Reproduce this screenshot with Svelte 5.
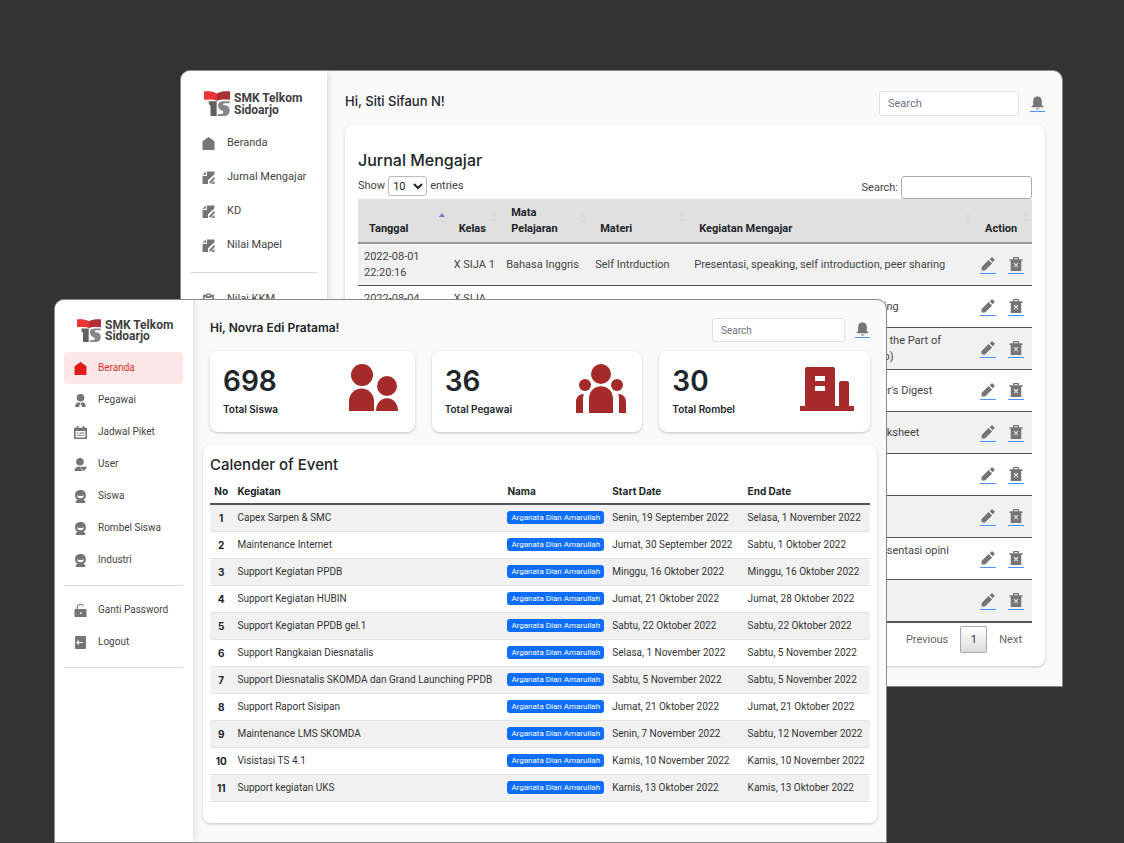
<script>
  const icons = {
    home: 'M12 0 1 8v16h22V8z',
    journal: 'M7 1v6H1zM9 1h14v5L11 17v7H1V9h8zM14 20l8-9 2 3-7 8-4 1zM23 18v6h-6z',
    clipboard: 'M8 1h8v2h6v20H2V3h6zm2 2v3h4V3zM5 7v13h14V7h-2v2H7V7zM7 12h10v2H7zm0 4h7v2H7z',
    tie: 'M12 0a7 7 0 1 1 0 14a7 7 0 0 1 0-14M2 24c0-6 3-9 7-9l3 3 3-3c4 0 7 3 7 9h-7l-2-5h-2l-2 5z',
    calendar: 'M5 0h3v3h8V0h3v3h5v21H0V3h5zM3 9v12h18V9zM5 12h3v2H5zm5 0h9v2h-9zM5 16h9v2H5zm11 0h3v2h-3z',
    heart: 'M11 0a7 7 0 1 1 0 14a7 7 0 0 1 0-14M1 24c0-5 3-8 7-8h4c0 3 2 6 4 8zM18 24l-5-5c-1-3 3-5 5-2 2-3 6-1 5 2z',
    student: 'M12 0C5 0 2 4 2 10c0 4 2 7 5 8-3 1-4 3-4 6h18c0-3-1-5-4-6 3-1 5-4 5-8 0-6-3-10-10-10M6 9c1 1 3 2 6 2s5-1 6-2c0 4-2 6-6 6s-6-2-6-6',
    lock: 'M5 9V6c0-8 12-8 13-2h-2c-2-4-9-3-9 2v3h16v15H1V9zm6 6v3h3v-3z',
    logout: 'M2 0h20v24H2zM9 7l-5 5 5 5v-4h7v-2H9z',
    bell: 'M12 0c6 0 8 4 8 9v7l3 2v2H1v-2l3-2V9c0-5 2-9 8-9M8 22h8l-2 2h-4z',
    pencil: 'M1 23v-6L13 5l6 6L7 23zM15 4l3-3c1-1 2 0 3 1l2 2c1 1 0 2 0 2l-3 3z',
    trash: 'M7 0h10v4h6v3h-2v17H3V7H1V4h6zm2 2v2h6V2zM8 11l3 3-3 3 1 1 3-3 3 3 1-1-3-3 3-3-1-1-3 3-3-3z'
  };

  const backNav = [['home', 'Beranda'], ['journal', 'Jurnal Mengajar'], ['journal', 'KD'], ['journal', 'Nilai Mapel']];
  const frontNav = [['home', 'Beranda'], ['tie', 'Pegawai'], ['calendar', 'Jadwal Piket'], ['heart', 'User'], ['student', 'Siswa'], ['student', 'Rombel Siswa'], ['student', 'Industri']];
  const accountNav = [['lock', 'Ganti Password'], ['logout', 'Logout']];

  const journal = [
    ['2022-08-01 22:20:16', 'X SIJA 1', 'Bahasa Inggris', 'Self Intrduction', 'Presentasi, speaking, self introduction, peer sharing'],
    ['2022-08-04 07:10:22', 'X SIJA\n2', 'Bahasa Inggris', 'Self Intrduction', 'Speaking, self introduction in peer sharing'],
    ['2022-08-08 07:12:40', 'X SIJA 1', 'Bahasa Inggris', 'Part of Speech', 'Students read the text and then analyze the Part of\nSpeech in groups, share the answer (pro)'],
    ['2022-08-11 07:15:03', 'X SIJA 1', 'Bahasa Inggris', 'Reading', "Reading and summarizing an old Reader's Digest"],
    ['2022-08-15 07:11:35', 'X SIJA 1', 'Bahasa Inggris', 'Reading', 'Reading the text and answering the worksheet'],
    ['2022-08-18 07:14:19', 'X SIJA 1', 'Bahasa Inggris', 'Vocabulary', 'Diskusi kelompok'],
    ['2022-08-22 07:10:51', 'X SIJA 1', 'Bahasa Inggris', 'Opinion', 'Diskusi kelompok'],
    ['2022-08-25 07:13:27', 'X SIJA 1', 'Bahasa Inggris', 'Opinion', 'Diskusi kelompok, menulis teks dan presentasi opini\ndi depan kelas'],
    ['2022-08-29 07:12:08', 'X SIJA 1', 'Bahasa Inggris', 'Opinion', 'Diskusi kelompok']
  ];
  const journalHead = ['Tanggal', 'Kelas', 'Mata Pelajaran', 'Materi', 'Kegiatan Mengajar', 'Action'];

  const person = 'Arganata Dian Amarullah';
  const events = [
    ['Capex Sarpen & SMC', 'Senin, 19 September 2022', 'Selasa, 1 November 2022'],
    ['Maintenance Internet', 'Jumat, 30 September 2022', 'Sabtu, 1 Oktober 2022'],
    ['Support Kegiatan PPDB', 'Minggu, 16 Oktober 2022', 'Minggu, 16 Oktober 2022'],
    ['Support Kegiatan HUBIN', 'Jumat, 21 Oktober 2022', 'Jumat, 28 Oktober 2022'],
    ['Support Kegiatan PPDB gel.1', 'Sabtu, 22 Oktober 2022', 'Sabtu, 22 Oktober 2022'],
    ['Support Rangkaian Diesnatalis', 'Selasa, 1 November 2022', 'Sabtu, 5 November 2022'],
    ['Support Diesnatalis SKOMDA dan Grand Launching PPDB', 'Sabtu, 5 November 2022', 'Sabtu, 5 November 2022'],
    ['Support Raport Sisipan', 'Jumat, 21 Oktober 2022', 'Jumat, 21 Oktober 2022'],
    ['Maintenance LMS SKOMDA', 'Senin, 7 November 2022', 'Sabtu, 12 November 2022'],
    ['Visistasi TS 4.1', 'Kamis, 10 November 2022', 'Kamis, 10 November 2022'],
    ['Support kegiatan UKS', 'Kamis, 13 Oktober 2022', 'Kamis, 13 Oktober 2022']
  ];
  const stats = [['698', 'Total Siswa'], ['36', 'Total Pegawai'], ['30', 'Total Rombel']];
</script>

{#snippet icon(name)}
  <svg class="icon" viewBox="0 0 24 24" aria-hidden="true"><path fill-rule="evenodd" d={icons[name]} /></svg>
{/snippet}

{#snippet logo()}
  <div class="logo">
    <svg viewBox="0 0 76 76" aria-hidden="true">
      <path fill="#ee3338" d="M0 1C15 0 28 1 38 7V29C28 23 14 26 0 25Z" />
      <path fill="#ad3035" d="M76 1C62 0 48 1 38 7V29C48 23 62 26 76 25Z" />
      <path fill="#5f6163" d="M14 30H37V73H19V48C19 42 17 40 14 39Z" />
      <path fill="#85878a" d="M41 42C41 33 48 30 58 30H75V36H61C55 36 54 40 59 42C70 42 75 48 75 57C75 69 68 73 58 73H41V67H50C57 67 59 61 53 58C46 56 41 50 41 42Z" />
    </svg>
    <span>SMK Telkom<br />Sidoarjo</span>
  </div>
{/snippet}

{#snippet nav(items, active)}
  <ul>
    {#each items as [name, label], i}
      <li><a href="#top" class="item" class:active={i === active}>{@render icon(name)}{label}</a></li>
    {/each}
  </ul>
{/snippet}

{#snippet topbar(name)}
  <header>
    <h1>Hi, {name}!</h1>
    <input class="search" type="search" placeholder="Search" aria-label="Search" />
    <a class="glyph" href="#top" aria-label="Notifications">{@render icon('bell')}</a>
  </header>
{/snippet}

<div class="desktop">
  <section class="window back">
    <aside>
      {@render logo()}
      {@render nav(backNav, -1)}
      <hr />
      {@render nav([['clipboard', 'Nilai KKM']], -1)}
    </aside>
    <main>
      {@render topbar('Siti Sifaun N')}
      <div class="card journal">
        <h2>Jurnal Mengajar</h2>
        <div class="controls">
          <label>Show <select><option>10</option><option>25</option></select> entries</label>
          <label>Search: <input type="search" /></label>
        </div>
        <table>
          <thead>
            <tr>
              {#each journalHead as h, i}
                <th>{h}<svg class="sort" class:on={i === 0} viewBox="0 0 6 10" aria-hidden="true"><path d="M0 4 3 0l3 4z" /><path class="down" d="M0 6l3 4 3-4z" /></svg></th>
              {/each}
            </tr>
          </thead>
          <tbody>
            {#each journal as row}
              <tr>
                {#each row as cell}<td class="text">{cell}</td>{/each}
                <td>
                  <div class="actions">
                    <a class="glyph" href="#top" aria-label="Edit">{@render icon('pencil')}</a>
                    <a class="glyph" href="#top" aria-label="Delete">{@render icon('trash')}</a>
                  </div>
                </td>
              </tr>
            {/each}
          </tbody>
        </table>
        <div class="pager">
          <button>Previous</button><button class="current">1</button><button>Next</button>
        </div>
      </div>
    </main>
  </section>

  <section class="window front">
    <aside>
      {@render logo()}
      {@render nav(frontNav, 0)}
      <hr />
      {@render nav(accountNav, -1)}
      <hr />
    </aside>
    <main>
      {@render topbar('Novra Edi Pratama')}
      <div class="stats">
        {#each stats as [value, label], i}
          <div class="card stat">
            <div><strong>{value}</strong><span>{label}</span></div>
            {#if i === 0}
              <svg width="50" height="50" viewBox="0 0 50 50" aria-hidden="true">
                <circle cx="13" cy="11" r="11" /><path d="M0 47V37a12 12 0 0 1 25 0V47z" />
                <circle cx="38" cy="22" r="10" /><path d="M27 47c0-17 22-17 22 0z" />
              </svg>
            {:else if i === 1}
              <svg width="50" height="50" viewBox="0 0 50 50" aria-hidden="true">
                <circle cx="25" cy="10" r="10" /><circle cx="9" cy="21" r="6" /><circle cx="41" cy="21" r="6" />
                <path d="M13 49V35c0-17 24-17 24 0V49zM0 49V38c0-5 3-8 8-8-1 2-1 4-1 6V49zM50 49V38c0-5-3-8-8-8 1 2 1 4 1 6V49z" />
              </svg>
            {:else}
              <svg width="54" height="50" viewBox="0 0 54 50" aria-hidden="true">
                <path fill-rule="evenodd" d="M7 3h26q2 0 2 2v37h4V19q0-2 2-2h6q2 0 2 2v23h5v5H0v-5h5V5q0-2 2-2m8 9v5h10v-5zm0 10v5h10v-5z" />
              </svg>
            {/if}
          </div>
        {/each}
      </div>
      <div class="card events">
        <h2>Calender of Event</h2>
        <table>
          <thead><tr><th>No</th><th>Kegiatan</th><th>Nama</th><th>Start Date</th><th>End Date</th></tr></thead>
          <tbody>
            {#each events as [title, start, end], i}
              <tr><th scope="row">{i + 1}</th><td>{title}</td><td><span class="badge">{person}</span></td><td>{start}</td><td>{end}</td></tr>
            {/each}
          </tbody>
        </table>
      </div>
    </main>
  </section>
</div>

<style>
  :global(body) { margin: 0; background: #333; }
  * { box-sizing: border-box; }
  .desktop {
    display: grid;
    min-height: 100vh;
    background: #333;
    color: #212529;
    font: 400 10px/16px Roboto, sans-serif;
  }
  .window {
    grid-area: 1 / 1;
    display: flex;
    background: #fafafa;
    border: 1px solid #888;
    border-radius: 10px 10px 0 0;
    overflow: hidden;
  }
  .back { align-self: start; margin: 70px 61px 0 180px; font-size: 11px; }
  .front { margin: 299px 237px 0 54px; z-index: 1; }

  aside { background: #fff; box-shadow: 0 0 8px rgb(0 0 0 / 18%); flex: none; }
  .back aside { width: 146px; padding: 19px 10px 0 9px; }
  .front aside { width: 138px; padding: 17px 10px 0 9px; }
  .logo { display: flex; align-items: center; gap: 4px; margin-left: 14px; height: 27px; color: #414042; font-size: 12px; line-height: 12px; font-weight: 700; white-space: nowrap; }
  .logo svg { width: 26px; flex: none; }
  .front .logo { margin-left: 13px; line-height: 11px; }
  .front .logo svg { width: 24px; }
  ul { list-style: none; margin: 0; padding: 0; }
  .item { display: flex; align-items: center; height: 34px; padding-left: 12px; gap: 12px; color: #444; text-decoration: none; border-radius: 3px; white-space: nowrap; }
  .icon { width: 13px; height: 13px; fill: #757575; flex: none; display: block; }
  .back ul { padding-top: 9px; }
  .front ul { padding-top: 8px; }
  .front .item { height: 32px; padding-left: 10px; gap: 11px; }
  .front .item.active { color: #e03131; background: #fde7e7; }
  .active .icon { fill: #e01b1b; }
  hr { border: 0; border-top: 1px solid #d8dadb; margin: 10px 0 0; }
  .front hr { margin-top: 9px; }

  main { flex: 1; min-width: 0; }
  .back main { padding: 20px 17px 20px 18px; }
  .front main { padding: 18px 9px 18px 10px; }
  header { display: flex; align-items: center; height: 25px; }
  h1 { flex: 1; margin: 0; padding-bottom: 5px; font: 500 13px/16px Inter, sans-serif; }
  .front h1 { font-size: 12px; font-weight: 600; }
  h2 { margin: 0; font: 500 16px/20px Inter, sans-serif; }
  .front h2 { font-size: 15px; }
  input, select, button { font: inherit; color: inherit; }
  .search { width: 140px; height: 25px; border: 1px solid #dee2e6; border-radius: 3px; background: #fff; padding: 0 8px; margin-right: 11px; }
  .search::placeholder { color: #6c757d; opacity: 1; }
  .glyph { display: block; width: 15px; padding: 0 1px 1px; border-bottom: 1px solid #4d94ff; }
  header .icon { height: 14px; }
  .card { background: #fff; border-radius: 8px; box-shadow: 0 1px 3px rgb(0 0 0 / 22%); }
  table { width: 100%; border-collapse: collapse; table-layout: fixed; }
  th { text-align: left; font-weight: 700; }
  tbody tr:nth-child(odd) { background: #f1f1f1; }

  .journal { margin-top: 9px; padding: 25px 13px 13px; }
  .controls { display: flex; justify-content: space-between; height: 23px; margin-top: 6px; color: #444; }
  .controls label { display: flex; align-items: center; align-self: flex-start; gap: 3px; }
  .controls select { width: 39px; height: 20px; border: 1px solid #bbb; border-radius: 3px; background: #fff; padding: 0; color: #222; }
  .controls input { width: 131px; height: 23px; border: 1px solid #aaa; border-radius: 3px; background: #fff; }
  .journal thead { background: #e0e0e0; }
  .journal thead th { position: relative; height: 44px; padding: 5px 11px; vertical-align: bottom; border-bottom: 2px solid #999; }
  .journal th:nth-child(1) { width: 13.3%; }
  .journal th:nth-child(2) { width: 7.8%; }
  .journal th:nth-child(3) { width: 13.2%; }
  .journal th:nth-child(4) { width: 14.7%; }
  .journal th:nth-child(6) { width: 8.6%; }
  .journal td { height: 42px; padding: 5px 1px 4px 6px; border-bottom: 1px solid #555; color: #444; }
  .text { white-space: pre-line; }
  .journal tbody tr:last-child td { border-bottom-width: 2px; }
  .sort { position: absolute; right: 3px; top: 14px; width: 6px; height: 10px; fill: #d9d9db; }
  .sort.on { fill: #7478e0; }
  .sort.on .down { display: none; }
  .actions { display: flex; gap: 12px; }
  .actions .glyph { width: 16px; padding-bottom: 2px; }
  .actions .icon { width: 14px; height: 14px; }
  .pager { display: flex; justify-content: flex-end; gap: 12px; padding: 3px 10px 0 0; }
  .pager button { height: 27px; padding: 0; border: 0; background: none; color: #666; }
  .pager .current { width: 27px; border: 1px solid #aaa; border-radius: 2px; background: linear-gradient(#fff, #dcdcdc); color: #333; }

  .front header { height: 24px; padding: 0 7px; }
  .front .search { width: 133px; height: 24px; margin-right: 10px; }
  .stats { display: grid; grid-template-columns: 205fr 211fr 211fr; gap: 17px; padding: 9px 7px 0; }
  .stat { display: flex; justify-content: space-between; align-items: flex-start; height: 81px; padding: 13px 16px 0 13px; }
  .stat svg { fill: #a52a2a; }
  .stat strong { display: block; font: 600 28px/34px Inter, sans-serif; }
  .stat span { display: block; margin-top: 3px; font: 600 10px/16px Inter, sans-serif; }
  .events { margin-top: 13px; padding: 10px 7px 21px; }
  .events table { margin-top: 3px; }
  .events th, .events td { height: 27px; padding: 0 5px; border-bottom: 1px solid #e3e5e7; white-space: nowrap; }
  .events th { font-family: Inter, sans-serif; }
  .events td { color: #333; }
  .events thead th { height: 26px; border-bottom: 2px solid #55585b; }
  .events th:nth-child(1) { width: 3.4%; text-align: center; padding: 0; }
  .events th:nth-child(2) { width: 40.9%; }
  .events th:nth-child(3) { width: 15.9%; }
  .events th:nth-child(4) { width: 20.5%; }
  .badge { display: block; width: fit-content; height: 13px; padding: 0 4px; border-radius: 3px; background: #0d6efd; color: #fff; font-size: 8px; line-height: 13px; }
</style>
